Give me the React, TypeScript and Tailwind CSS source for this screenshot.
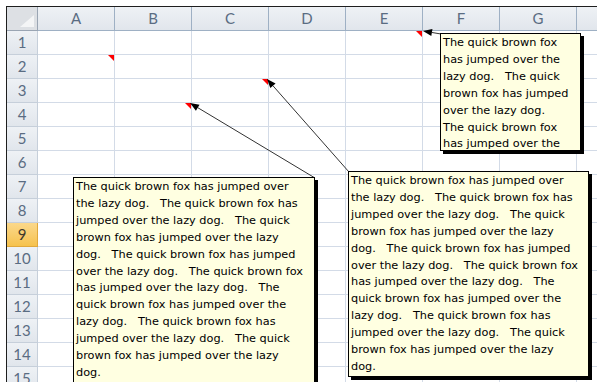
import React from "react";

const COLS = ["A", "B", "C", "D", "E", "F", "G", ""];
const ROWS = Array.from({ length: 15 }, (_, i) => i + 1);

const LONG = [
  "The quick brown fox has jumped over",
  "the lazy dog.   The quick brown fox has",
  "jumped over the lazy dog.   The quick",
  "brown fox has jumped over the lazy",
  "dog.   The quick brown fox has jumped",
  "over the lazy dog.   The quick brown fox",
  "has jumped over the lazy dog.   The",
  "quick brown fox has jumped over the",
  "lazy dog.   The quick brown fox has",
  "jumped over the lazy dog.   The quick",
  "brown fox has jumped over the lazy",
  "dog.",
];

const SHORT = [
  "The quick brown fox",
  "has jumped over the",
  "lazy dog.   The quick",
  "brown fox has jumped",
  "over the lazy dog.",
  "The quick brown fox",
  "has jumped over the",
  "lazy dog.",
];

function Comment({
  lines,
  className,
}: {
  lines: string[];
  className: string;
}) {
  return (
    <div
      className={
        "absolute overflow-hidden border border-black bg-[#ffffe1] pl-[2px] pt-[1px] text-[11.3px] leading-[16.9px] text-black shadow-[3px_3px_0_0_#000] " +
        className
      }
      style={{ fontFamily: "'DejaVu Sans', 'Open Sans', sans-serif" }}
    >
      {lines.map((l, i) => (
        <div key={i} className="whitespace-pre">
          {l}
        </div>
      ))}
    </div>
  );
}

function Arrow({ x1, y1, x2, y2 }: { x1: number; y1: number; x2: number; y2: number }) {
  const dx = x2 - x1;
  const dy = y2 - y1;
  const len = Math.hypot(dx, dy);
  const ux = dx / len;
  const uy = dy / len;
  const hl = 9;
  const hw = 3.5;
  const bx = x2 - ux * hl;
  const by = y2 - uy * hl;
  const p1 = `${x2},${y2}`;
  const p2 = `${bx - uy * hw},${by + ux * hw}`;
  const p3 = `${bx + uy * hw},${by - ux * hw}`;
  return (
    <g>
      <line x1={x1} y1={y1} x2={bx} y2={by} stroke="#333" strokeWidth={1} />
      <polygon points={`${p1} ${p2} ${p3}`} fill="#000" />
    </g>
  );
}

function Flag() {
  return (
    <div className="absolute right-0 top-0 h-0 w-0 border-l-[6px] border-t-[6px] border-l-transparent border-t-[#ff0000]" />
  );
}

export default function App() {
  const flags: Record<string, boolean> = { "2-0": true, "4-1": true, "3-2": true, "1-4": true };
  return (
    <div
      className="relative h-[382px] w-[597px] overflow-hidden bg-white"
      style={{ fontFamily: "Lato, 'Open Sans', sans-serif" }}
    >
      <div className="pl-[6px] pt-[6px]">
        <div className="border-l border-t border-[#1e1e1e]">
          <div className="grid grid-cols-[31px_77px_77px_77px_77px_77px_77px_77px_60px] grid-rows-[24px] auto-rows-[24px]">
            <div className="relative border-b border-r border-[#9aa5b3] bg-[#dde0e4]">
              <div className="absolute bottom-[3px] right-[3px] h-0 w-0 border-b-[12px] border-l-[14px] border-b-[#f4f5f6] border-l-transparent" />
            </div>
            {COLS.map((c, i) => (
              <div
                key={i}
                className="flex items-center justify-center border-b border-r border-[#9eb0c4] bg-gradient-to-b from-[#eef1f5] to-[#e1e6ec] text-[15px] text-[#5a6c82]"
              >
                {c}
              </div>
            ))}
            {ROWS.map((r) => (
              <React.Fragment key={r}>
                <div
                  className={
                    r === 9
                      ? "flex items-center justify-center border-b border-r border-[#e0a83c] bg-gradient-to-b from-[#fbd88a] to-[#f6c24c] text-[15px] text-[#3f3a2c]"
                      : "flex items-center justify-center border-b border-r border-[#c6cfda] bg-gradient-to-b from-[#eef1f5] to-[#e1e6ec] text-[15px] text-[#5a6c82]"
                  }
                >
                  {r}
                </div>
                {COLS.map((_, ci) => (
                  <div key={ci} className="relative border-b border-r border-[#d3dbe7] bg-white">
                    {flags[`${r}-${ci}`] ? <Flag /> : null}
                  </div>
                ))}
              </React.Fragment>
            ))}
          </div>
        </div>
      </div>

      <svg className="pointer-events-none absolute left-0 top-0" width={597} height={382}>
        <Arrow x1={441} y1={34} x2={423} y2={31} />
        <Arrow x1={315} y1={178} x2={190} y2={103} />
        <Arrow x1={349} y1={172} x2={267} y2={79} />
      </svg>

      <Comment lines={SHORT} className="left-[440px] top-[33px] h-[118px] w-[141px]" />
      <Comment lines={LONG} className="left-[73px] top-[177px] w-[242px]" />
      <Comment lines={LONG} className="left-[348px] top-[171px] w-[241px]" />
    </div>
  );
}
